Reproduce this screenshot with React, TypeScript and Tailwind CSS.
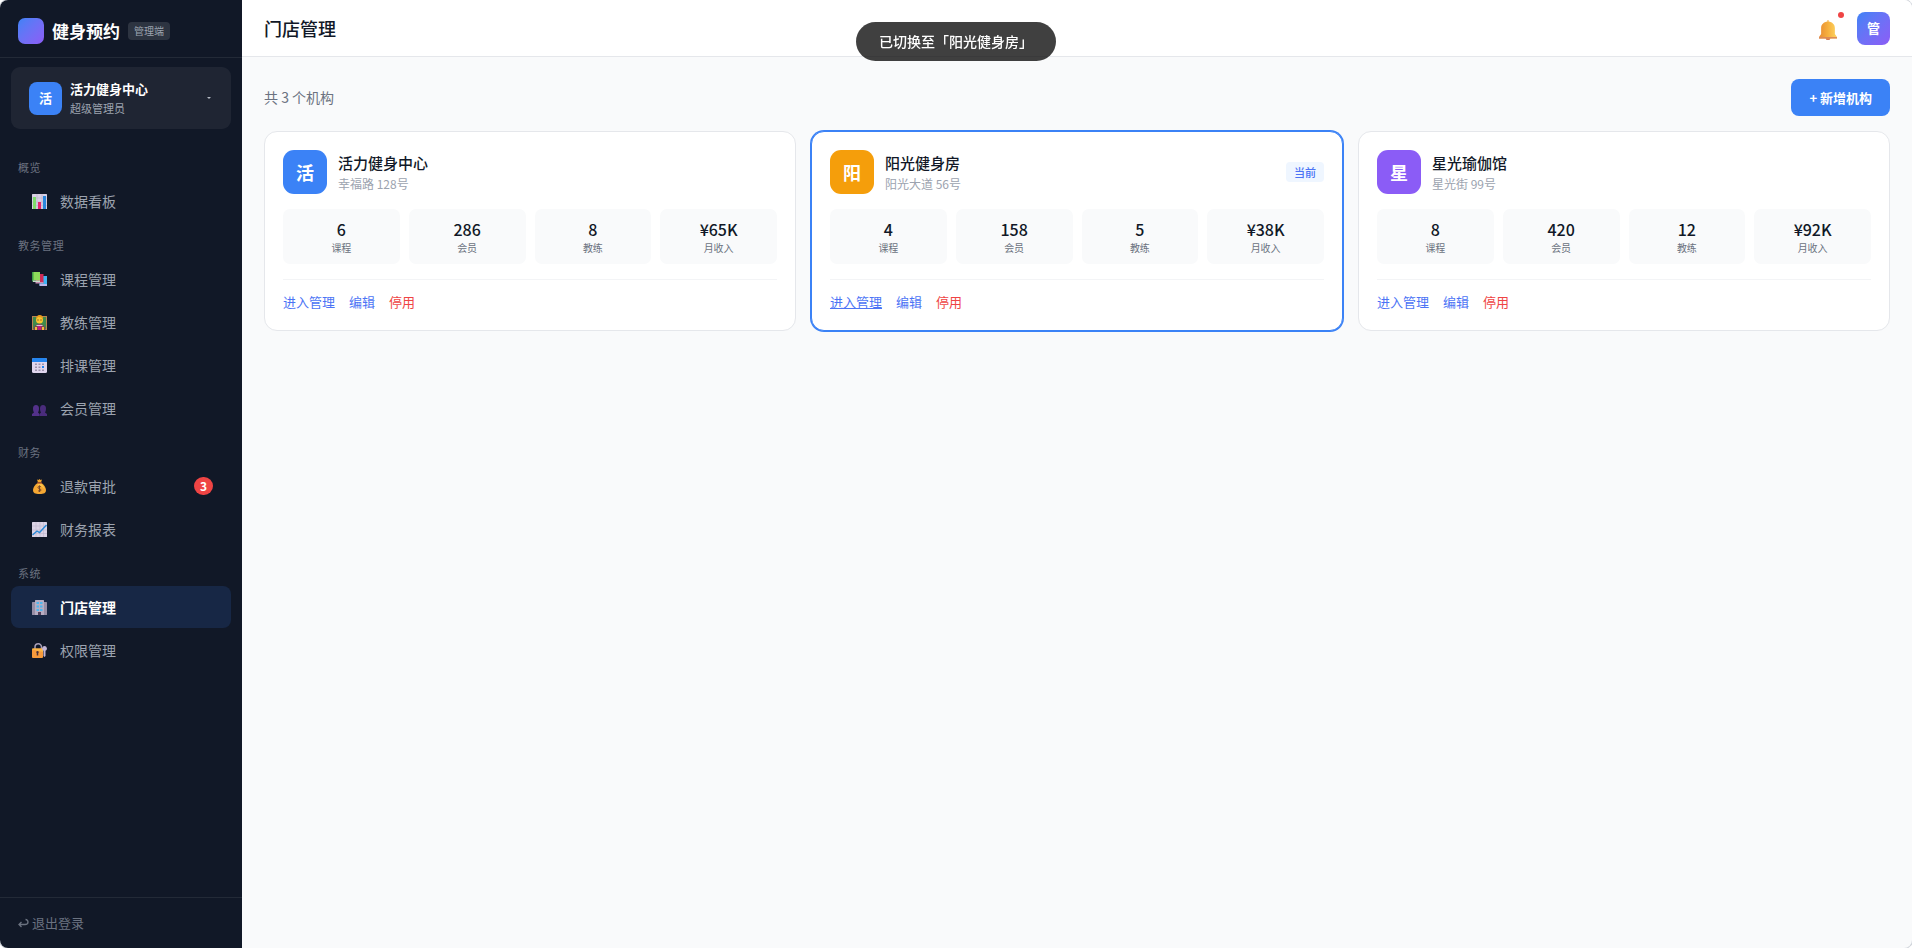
import type { ReactNode } from "react";

type IconName =
  | "chart"
  | "books"
  | "teacher"
  | "calendar"
  | "people"
  | "moneybag"
  | "trend"
  | "building"
  | "lock";

const iconArt: Record<IconName, ReactNode> = {
  chart: (
    <>
      <rect width="30" height="30" rx="1" fill="#d9d0e4" />
      <path d="M0 8h30M0 16h30M0 23h30M10 0v30M20 0v30" stroke="#bdb3cb" strokeWidth="1.2" />
      <rect x="2" y="6" width="6" height="24" fill="#7fdc6a" />
      <rect x="12" y="16" width="6" height="14" fill="#e8246c" />
      <rect x="22" y="4" width="6" height="26" fill="#2a86dc" />
    </>
  ),
  books: (
    <>
      <path d="M15 8h15v19H15z" fill="#3fb4f2" />
      <path d="M15 24h15v4H15z" fill="#b9b6ea" />
      <path d="M8 4h15v18H8z" fill="#d02a55" />
      <path d="M7 20h16v3H7z" fill="#c98fb4" />
      <path d="M0 0h16v17H0z" fill="#8edb5a" />
      <path d="M0 0h3v19H0z" fill="#3f9c46" />
      <path d="M2 17h14v3H2z" fill="#c7dccb" />
    </>
  ),
  teacher: (
    <>
      <rect y="2" width="30" height="28" fill="#b98450" />
      <rect x="2" y="4" width="26" height="24" fill="#3f8a4c" />
      <path d="M3 30c0-8 5-11 12-11s12 3 12 11z" fill="#7a4a52" />
      <path d="M11 19h8l-1 11h-6z" fill="#c21a78" />
      <path d="M6 24h4v6H6zM20 24h4v6h-4z" fill="#f7b93a" />
      <circle cx="15" cy="10" r="7" fill="#fbc52e" />
      <path d="M8 9c0-6 3-9 7-9s8 2 7 9l-3-4-7-1z" fill="#e99a1c" />
      <path d="M10 10h4M16 10h4" stroke="#8b5a2a" strokeWidth="1.5" />
      <path d="M9 21h12" stroke="#d8c8d8" strokeWidth="2" />
    </>
  ),
  calendar: (
    <>
      <rect width="30" height="30" rx="3" fill="#e0d6ee" />
      <path d="M3 0h24a3 3 0 0 1 3 3v5H0V3a3 3 0 0 1 3-3z" fill="#2485f0" />
      <g fill="#9d93ad">
        <rect x="6" y="11" width="4" height="3" />
        <rect x="13" y="11" width="4" height="3" />
        <rect x="20" y="11" width="4" height="3" />
        <rect x="6" y="17" width="4" height="3" />
        <rect x="13" y="17" width="4" height="3" />
        <rect x="6" y="23" width="4" height="3" />
        <rect x="13" y="23" width="4" height="3" />
        <rect x="20" y="23" width="4" height="3" />
      </g>
      <rect x="20" y="16" width="4" height="4" fill="#2485f0" />
    </>
  ),
  people: (
    <g fill="#53318a">
      <path d="M2 15a6 7 0 0 1 12 0c0 4-1 6-2 8l3 3v4H0v-4l4-3c-1-2-2-4-2-8z" />
      <path d="M16 15a6 7 0 0 1 12 0c0 4-1 6-2 8l4 3v4H15v-4l3-3c-1-2-2-4-2-8z" fill="#4a2c7c" />
    </g>
  ),
  moneybag: (
    <>
      <path d="M10 1l3 1 2-2 2 2 3-1-2 6h-6z" fill="#f0a32c" />
      <path d="M11 8h8c5 4 9 9 9 14 0 6-4 8-13 8S2 28 2 22C2 17 6 12 11 8z" fill="#f5a733" />
      <path d="M12 9h6c4 4 7 8 7 12-3-5-7-8-14-9z" fill="#fbc64a" />
      <path d="M10 8h10" stroke="#b1502c" strokeWidth="2.4" />
      <path
        d="M18 16c-1-2-6-2-6 1s6 2 6 5-5 3-6 1M15 13v13"
        fill="none"
        stroke="#7a4a2c"
        strokeWidth="2"
      />
    </>
  ),
  trend: (
    <>
      <rect width="30" height="30" rx="1" fill="#dcd4e6" />
      <path d="M0 8h30M0 16h30M0 23h30M8 0v30M16 0v30M23 0v30" stroke="#c0b6ce" strokeWidth="1.2" />
      <path d="M1 26l9-8 5 3L29 6" fill="none" stroke="#2a8ad8" strokeWidth="2.8" />
    </>
  ),
  building: (
    <>
      <rect y="4" width="8" height="26" rx="1" fill="#978ea6" />
      <rect x="22" y="4" width="8" height="26" rx="1" fill="#978ea6" />
      <rect x="6" width="18" height="30" rx="1" fill="#b6adc3" />
      <g fill="#4fb6ee">
        <rect x="9" y="4" width="5" height="4" />
        <rect x="16" y="4" width="5" height="4" />
        <rect x="9" y="11" width="5" height="4" />
        <rect x="16" y="11" width="5" height="4" />
        <rect x="9" y="18" width="5" height="4" />
        <rect x="16" y="18" width="5" height="4" />
      </g>
      <rect x="12" y="24" width="6" height="6" fill="#54405a" />
    </>
  ),
  lock: (
    <>
      <path d="M6 13V8a6.500 6.500 0 0 1 13 0v5" fill="none" stroke="#a79db6" strokeWidth="3" />
      <rect y="11" width="22" height="19" rx="2" fill="#f79a3c" />
      <path d="M2 11h18a2 2 0 0 1 2 2v5L0 13a2 2 0 0 1 2-2z" fill="#fbb848" />
      <path d="M11 16a2.500 2.500 0 0 1 1.500 4.500V25h-3v-4.500A2.500 2.500 0 0 1 11 16z" fill="#4a3038" />
      <path d="M25 6a5 5 0 0 1 2 9.500V26l-2 2-2-2V15.500A5 5 0 0 1 25 6z" fill="#c3b6d6" />
    </>
  ),
};

function NavIcon({ name }: { name: IconName }) {
  return (
    <svg viewBox="0 0 30 30" className="size-[15px]" aria-hidden="true">
      {iconArt[name]}
    </svg>
  );
}

type NavEntry = { label: string; icon: IconName; badge?: number; active?: boolean };

const navGroups: { title: string; items: NavEntry[] }[] = [
  { title: "概览", items: [{ label: "数据看板", icon: "chart" }] },
  {
    title: "教务管理",
    items: [
      { label: "课程管理", icon: "books" },
      { label: "教练管理", icon: "teacher" },
      { label: "排课管理", icon: "calendar" },
      { label: "会员管理", icon: "people" },
    ],
  },
  {
    title: "财务",
    items: [
      { label: "退款审批", icon: "moneybag", badge: 3 },
      { label: "财务报表", icon: "trend" },
    ],
  },
  {
    title: "系统",
    items: [
      { label: "门店管理", icon: "building", active: true },
      { label: "权限管理", icon: "lock" },
    ],
  },
];

type Store = {
  name: string;
  address: string;
  initial: string;
  tone: string;
  current?: boolean;
  stats: [string, string][];
};

const stores: Store[] = [
  {
    name: "活力健身中心",
    address: "幸福路 128号",
    initial: "活",
    tone: "bg-[#3b82f6]",
    stats: [["6", "课程"], ["286", "会员"], ["8", "教练"], ["¥65K", "月收入"]],
  },
  {
    name: "阳光健身房",
    address: "阳光大道 56号",
    initial: "阳",
    tone: "bg-[#f59e0b]",
    current: true,
    stats: [["4", "课程"], ["158", "会员"], ["5", "教练"], ["¥38K", "月收入"]],
  },
  {
    name: "星光瑜伽馆",
    address: "星光街 99号",
    initial: "星",
    tone: "bg-[#8b5cf6]",
    stats: [["8", "课程"], ["420", "会员"], ["12", "教练"], ["¥92K", "月收入"]],
  },
];

function Sidebar() {
  return (
    <aside className="flex w-[242px] shrink-0 flex-col bg-[#111827]">
      <div className="flex items-center gap-[8px] border-b border-white/8 px-[18px] pt-[18px] pb-[13px]">
        <span className="size-[26px] rounded-[7px] bg-linear-135 from-[#3b82f6] to-[#8b5cf6]" />
        <span className="text-[17px] leading-[26px] font-bold text-white">健身预约</span>
        <span className="rounded-[4px] bg-white/12 px-[6px] text-[10px] leading-[18px] text-[#9ca3af]">管理端</span>
      </div>

      <button
        type="button"
        className="mx-[11px] mt-[9px] flex items-center gap-[8px] rounded-[9px] bg-white/6 px-[18px] py-[12px] text-left"
      >
        <span className="flex size-[33px] items-center justify-center rounded-[8px] bg-[#3b82f6] text-[13px] font-bold text-white">
          活
        </span>
        <span className="flex-1">
          <span className="block text-[13px] leading-[20px] font-bold text-white">活力健身中心</span>
          <span className="block text-[11px] leading-[18px] text-[#9ca3af]">超级管理员</span>
        </span>
        <svg viewBox="0 0 4 2" className="mr-[2px] h-[2px] w-[4px]" aria-hidden="true">
          <path d="M0 0h4L2 2z" fill="#b4bac4" />
        </svg>
      </button>

      <nav className="mt-[16px] flex-1">
        {navGroups.map((group) => (
          <section key={group.title}>
            <h2 className="px-[18px] pt-[14px] pb-[5px] text-[11px] leading-[16px] tracking-wider text-[#6b7280]">
              {group.title}
            </h2>
            <ul className="px-[11px]">
              {group.items.map((item) => (
                <li key={item.label} className="pb-px">
                  <a
                    href="#"
                    className={
                      item.active
                        ? "flex h-[42px] items-center gap-[10px] rounded-[8px] bg-[#172745] px-[18px] text-[14px] font-bold text-white"
                        : "flex h-[42px] items-center gap-[10px] rounded-[8px] px-[18px] text-[14px] text-[#9ca3af]"
                    }
                  >
                    <span className="flex w-[21px] justify-center">
                      <NavIcon name={item.icon} />
                    </span>
                    {item.label}
                    {item.badge && (
                      <span className="ml-auto min-w-[19px] rounded-full bg-[#ef4444] text-center text-[12px] leading-[18px] font-bold text-white">
                        {item.badge}
                      </span>
                    )}
                  </a>
                </li>
              ))}
            </ul>
          </section>
        ))}
      </nav>

      <div className="border-t border-white/8 px-[18px] py-[15px]">
        <button type="button" className="flex items-center gap-[3px] text-[13px] leading-[20px] text-[#6b7280]">
          <svg viewBox="0 0 22 20" className="h-[10px] w-[11px]" fill="none" stroke="currentColor" strokeWidth="2.6" aria-hidden="true">
            <path d="M7 8l-5 5 5 5M2 13h12c4 0 6-2 6-5s-2-5-5-5" />
          </svg>
          退出登录
        </button>
      </div>
    </aside>
  );
}

function Header() {
  return (
    <header className="flex h-[57px] items-center justify-between border-b border-[#e5e7eb] bg-white px-[22px]">
      <h1 className="text-[18px] leading-[26px] font-medium text-[#111827]">门店管理</h1>
      <div className="flex items-center gap-[13px]">
        <button type="button" aria-label="通知" className="relative flex h-[33px] items-center px-[7px]">
          <svg viewBox="0 0 34 40" preserveAspectRatio="none" className="mt-[3px] h-[20px] w-[18px]" aria-hidden="true">
            <defs>
              <linearGradient id="bell" x1="0" x2="1" y1="0" y2="0">
                <stop offset="0" stopColor="#e88c34" />
                <stop offset="0.5" stopColor="#f6b03e" />
                <stop offset="1" stopColor="#fdd562" />
              </linearGradient>
            </defs>
            <ellipse cx="17" cy="37" rx="4.500" ry="3" fill="#d5714a" />
            <path
              d="M16 0h2v3c7 1 12 6 12 13v12l4 6v3H0v-3l4-6V16C4 9 9 4 16 3z"
              fill="url(#bell)"
            />
            <path d="M0 34h34v3H0z" fill="#dc8a58" />
          </svg>
          <span className="absolute top-0 right-0 size-[6px] rounded-full bg-[#ef4444]" />
        </button>
        <button
          type="button"
          className="size-[33px] rounded-[8px] bg-linear-135 from-[#3b82f6] to-[#8b5cf6] text-[13px] font-bold text-white"
        >
          管
        </button>
      </div>
    </header>
  );
}

function StoreCard({ store }: { store: Store }) {
  return (
    <article
      className={
        store.current
          ? "rounded-[13px] border border-[#3b82f6] bg-white p-[18px] ring-1 ring-[#3b82f6]"
          : "rounded-[13px] border border-[#e5e7eb] bg-white p-[18px]"
      }
    >
      <div className="flex items-center gap-[11px]">
        <span
          className={`flex size-[44px] items-center justify-center rounded-[11px] text-[18px] font-bold text-white ${store.tone}`}
        >
          {store.initial}
        </span>
        <div className="flex-1">
          <h3 className="text-[15px] leading-[23px] font-medium text-[#111827]">{store.name}</h3>
          <p className="text-[12px] leading-[20px] text-[#9ca3af]">{store.address}</p>
        </div>
        {store.current && (
          <span className="rounded-[4px] bg-[#eff6ff] px-[8px] text-[11px] leading-[20px] font-medium text-[#4c74f5]">
            当前
          </span>
        )}
      </div>

      <dl className="mt-[15px] grid grid-cols-4 gap-[9px]">
        {store.stats.map(([value, label]) => (
          <div key={label} className="flex flex-col-reverse rounded-[7px] bg-[#f9fafb] py-[9px] text-center">
            <dt className="text-[10px] leading-[14px] text-[#6b7280]">{label}</dt>
            <dd className="text-[16px] leading-[23px] font-medium text-[#111827]">{value}</dd>
          </div>
        ))}
      </dl>

      <div className="mt-[15px] flex gap-[14px] border-t border-[#f3f4f6] pt-[12px] text-[13px] leading-[20px]">
        <a href="#" className={store.current ? "text-[#4c74f5] underline" : "text-[#4c74f5]"}>
          进入管理
        </a>
        <a href="#" className="text-[#4c74f5]">编辑</a>
        <a href="#" className="text-[#ef4444]">停用</a>
      </div>
    </article>
  );
}

export default function App() {
  return (
    <div className="bg-white font-['Noto_Sans_CJK_SC',sans-serif]">
      <div className="flex min-h-screen overflow-hidden rounded-[8px] bg-[#f9fafb] shadow-[0_0_0_1px_#d1d5db]">
        <Sidebar />
        <div className="min-w-0 flex-1">
          <Header />
          <main className="p-[22px]">
            <div className="mb-[15px] flex items-center justify-between">
              <p className="text-[14px] text-[#6b7280]">共 3 个机构</p>
              <button
                type="button"
                className="rounded-[8px] bg-[#3b82f6] px-[18px] text-[13px] leading-[37px] font-bold text-white"
              >
                + 新增机构
              </button>
            </div>
            <div className="grid grid-cols-3 gap-[15px]">
              {stores.map((store) => (
                <StoreCard key={store.name} store={store} />
              ))}
            </div>
          </main>
        </div>
      </div>
      <div
        role="status"
        className="fixed top-[22px] left-1/2 -translate-x-1/2 rounded-full bg-black/75 px-[23px] text-[14px] leading-[39px] font-medium whitespace-nowrap text-white"
      >
        已切换至「阳光健身房」
      </div>
    </div>
  );
}
